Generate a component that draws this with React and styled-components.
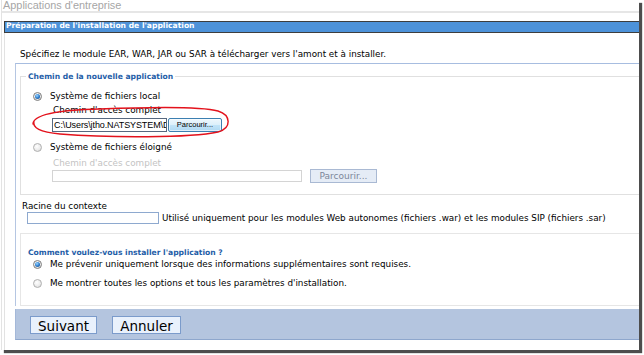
import React from "react";
import styled, { createGlobalStyle } from "styled-components";

const Global = createGlobalStyle`
  html, body { margin: 0; padding: 0; background: #fff; }
  body {
    font-family: "DejaVu Sans", Verdana, sans-serif;
    font-size: 8.8px;
    color: #000;
  }
  #root { width: 644px; height: 355px; overflow: hidden; }
`;

const Frame = styled.div`
  position: relative;
  box-sizing: border-box;
  margin-left: 1px;
  width: 638px;
  height: 350px;
  border-left: 1px solid #e3e3e3;
  background: #fff;
  box-shadow: 3px 3px 1px #4d4d4d;
  overflow: hidden;
  display: flex;
  flex-direction: column;
`;

const PageTitle = styled.div`
  flex: none;
  height: 11px;
  line-height: 11px;
  padding-left: 1px;
  border-bottom: 2px solid #e6e6e6;
  font-family: "Liberation Sans", Arial, sans-serif;
  font-size: 10.9px;
  color: #a6a6a6;
  white-space: nowrap;
`;

const HeaderBar = styled.div`
  flex: none;
  margin: 8px -10px 0 2px;
  height: 12px;
  box-sizing: border-box;
  border: 1px solid #3d3d3d;
  background: #4d92d9;
  color: #fff;
  font-weight: bold;
  font-size: 7.6px;
  line-height: 8px;
  padding-left: 1px;
  white-space: nowrap;
`;

const Body = styled.div`
  flex: 1;
  margin-left: 2px;
  border-left: 1px solid #e2e2e2;
  display: flex;
  flex-direction: column;
`;

const Intro = styled.div`
  padding: 16px 0 3px 15px;
  line-height: 11px;
  white-space: nowrap;
`;

const FormPanel = styled.div`
  margin: 0 -20px 0 10px;
  border-top: 1px solid #a7bde0;
  border-left: 1px solid #b5c6e2;
  padding-left: 4px;
  display: flex;
  flex-direction: column;
`;

const Fieldset = styled.fieldset`
  margin: 8px 0 0 0;
  padding: 0 0 11px 0;
  border: 1px solid #e0e0e0;
  min-width: 0;
`;

const Legend = styled.legend`
  margin-left: 5px;
  padding: 0 2px;
  font-weight: bold;
  font-size: 7.6px;
  line-height: 9px;
  color: #1f5ea8;
`;

const SectionTitle = styled.div`
  font-weight: bold;
  font-size: 7.6px;
  line-height: 9px;
  color: #1f5ea8;
  white-space: nowrap;
`;

const FsBody = styled.div`
  padding-left: 12px;
  display: flex;
  flex-direction: column;
`;

const RadioRow = styled.label`
  display: flex;
  align-items: center;
  gap: 8px;
  height: 14px;
  margin-top: ${(p) => p.$mt || 0}px;
  margin-left: ${(p) => p.$ml || 0}px;
  white-space: nowrap;
`;

const Radio = styled.span`
  flex: none;
  width: 9px;
  height: 9px;
  box-sizing: border-box;
  border-radius: 50%;
  border: 1px solid ${(p) => (p.$checked ? "#7d7d7d" : "#b0b0b0")};
  background: radial-gradient(circle at 40% 35%, #ffffff 0%, #ececec 55%, #d2d2d2 100%);
  display: flex;
  align-items: center;
  justify-content: center;
  &::after {
    content: "";
    display: ${(p) => (p.$checked ? "block" : "none")};
    width: 5px;
    height: 5px;
    border-radius: 50%;
    background: radial-gradient(circle at 40% 35%, #9bd6ff 0%, #2f7fcf 50%, #163f73 100%);
  }
`;

const FieldLabel = styled.div`
  margin-top: ${(p) => p.$mt || 0}px;
  margin-left: ${(p) => p.$ml || 0}px;
  line-height: 11px;
  color: ${(p) => (p.$disabled ? "#c3c3c3" : "#000")};
  white-space: nowrap;
`;

const InputRow = styled.div`
  display: flex;
  align-items: center;
  height: ${(p) => p.$h || 14}px;
  margin-top: ${(p) => p.$mt || 0}px;
  margin-left: ${(p) => p.$ml || 0}px;
  gap: ${(p) => p.$gap || 0}px;
  white-space: nowrap;
`;

const PathInput = styled.input`
  box-sizing: border-box;
  width: ${(p) => p.$w}px;
  height: ${(p) => p.$h}px;
  margin: 0;
  padding: 0 0 0 1px;
  border: 1px solid ${(p) => p.$border};
  border-radius: 0;
  background: #fff;
  font-family: "Liberation Sans", Arial, sans-serif;
  font-size: 9px;
  letter-spacing: -0.1px;
  color: #000;
  outline: none;
`;

const BrowseButton = styled.button`
  box-sizing: border-box;
  width: 54px;
  height: 14px;
  margin: 0;
  padding: 0;
  border: 1px solid #3c7fb1;
  border-radius: 2px;
  background: linear-gradient(#eef7fd 0%, #dcf0fb 48%, #c2e4f8 52%, #b0d9f3 100%);
  box-shadow: inset 0 0 0 1px rgba(255, 255, 255, 0.6);
  font-family: "Liberation Sans", Arial, sans-serif;
  font-size: 7.5px;
  line-height: 12px;
  color: #000;
`;

const DisabledButton = styled.button`
  box-sizing: border-box;
  width: 67px;
  height: 14px;
  margin: 0;
  padding: 0;
  border: 1px solid #a9b9d3;
  border-radius: 0;
  background: #e5ecf6;
  font-family: "DejaVu Sans", Verdana, sans-serif;
  font-size: 9px;
  line-height: 12px;
  color: #7c8799;
`;

const HelpText = styled.span`
  line-height: 12px;
`;

const OptionsBox = styled.div`
  margin-top: 9px;
  border-top: 1px solid #e6e6e6;
  border-left: 1px solid #e6e6e6;
  border-bottom: 1px solid #e6e6e6;
  padding: 14px 0 15px 7px;
  display: flex;
  flex-direction: column;
`;

const Footer = styled.div`
  flex: none;
  margin: 3px -20px 0 10px;
  height: 31px;
  box-sizing: border-box;
  background: #b4c5df;
  border-left: 1px solid #a4b8d8;
  border-bottom: 1px solid #8ea7cd;
  padding: 7px 0 0 14px;
  display: flex;
  gap: 15px;
`;

const ActionButton = styled.button`
  box-sizing: border-box;
  width: ${(p) => p.$w}px;
  height: 18px;
  margin: 0;
  padding: 2px 0 0;
  border: 1px solid #7b9bcb;
  border-radius: 0;
  background: #e9f1fc;
  font-family: "DejaVu Sans", Verdana, sans-serif;
  font-size: 13.5px;
  line-height: 14px;
  color: #000;
`;

const Scribble = styled.svg`
  position: absolute;
  left: 0;
  top: 0;
  pointer-events: none;
`;

export default function App() {
  return (
    <>
      <Global />
      <Frame>
        <PageTitle>Applications d'entreprise</PageTitle>
        <HeaderBar>Préparation de l'installation de l'application</HeaderBar>
        <Body>
          <Intro>
            Spécifiez le module EAR, WAR, JAR ou SAR à télécharger vers l'amont et à installer.
          </Intro>
          <FormPanel>
            <Fieldset>
              <Legend>Chemin de la nouvelle application</Legend>
              <FsBody>
                <RadioRow $mt={8}>
                  <Radio $checked />
                  <span>Système de fichiers local</span>
                </RadioRow>
                <FieldLabel $mt={2} $ml={20}>
                  Chemin d'accès complet
                </FieldLabel>
                <InputRow $mt={2} $ml={19} $gap={1}>
                  <PathInput
                    readOnly
                    value="C:\Users\jtho.NATSYSTEM\Desktop"
                    $w={115}
                    $h={14}
                    $border="#56687f"
                  />
                  <BrowseButton>Parcourir...</BrowseButton>
                </InputRow>
                <RadioRow $mt={8}>
                  <Radio />
                  <span>Système de fichiers éloigné</span>
                </RadioRow>
                <FieldLabel $mt={4} $ml={20} $disabled>
                  Chemin d'accès complet
                </FieldLabel>
                <InputRow $ml={19} $gap={8}>
                  <PathInput readOnly value="" $w={250} $h={12} $border="#d4d4d4" />
                  <DisabledButton>Parcourir...</DisabledButton>
                </InputRow>
              </FsBody>
            </Fieldset>
            <FieldLabel $mt={6} $ml={2}>
              Racine du contexte
            </FieldLabel>
            <InputRow $h={12} $ml={7} $gap={3}>
              <PathInput readOnly value="" $w={132} $h={12} $border="#8ea9cf" />
              <HelpText>
                Utilisé uniquement pour les modules Web autonomes (fichiers .war) et les modules SIP
                (fichiers .sar)
              </HelpText>
            </InputRow>
            <OptionsBox>
              <SectionTitle>Comment voulez-vous installer l'application ?</SectionTitle>
              <RadioRow $ml={5}>
                <Radio $checked />
                <span>Me prévenir uniquement lorsque des informations supplémentaires sont requises.</span>
              </RadioRow>
              <RadioRow $ml={5} $mt={5}>
                <Radio />
                <span>Me montrer toutes les options et tous les paramètres d'installation.</span>
              </RadioRow>
            </OptionsBox>
          </FormPanel>
          <Footer>
            <ActionButton $w={67}>Suivant</ActionButton>
            <ActionButton $w={69}>Annuler</ActionButton>
          </Footer>
        </Body>
        <Scribble width="638" height="350" viewBox="2 0 638 350">
          <path
            d="M 33 124 C 33 114, 60 110, 100 109 C 150 107, 200 106, 218 111 C 231 115, 232 128, 218 132 C 190 138, 110 138, 60 134 C 40 132, 32 128, 34 121"
            fill="none"
            stroke="#e3121c"
            strokeWidth="1.4"
            strokeLinecap="round"
          />
        </Scribble>
      </Frame>
    </>
  );
}
